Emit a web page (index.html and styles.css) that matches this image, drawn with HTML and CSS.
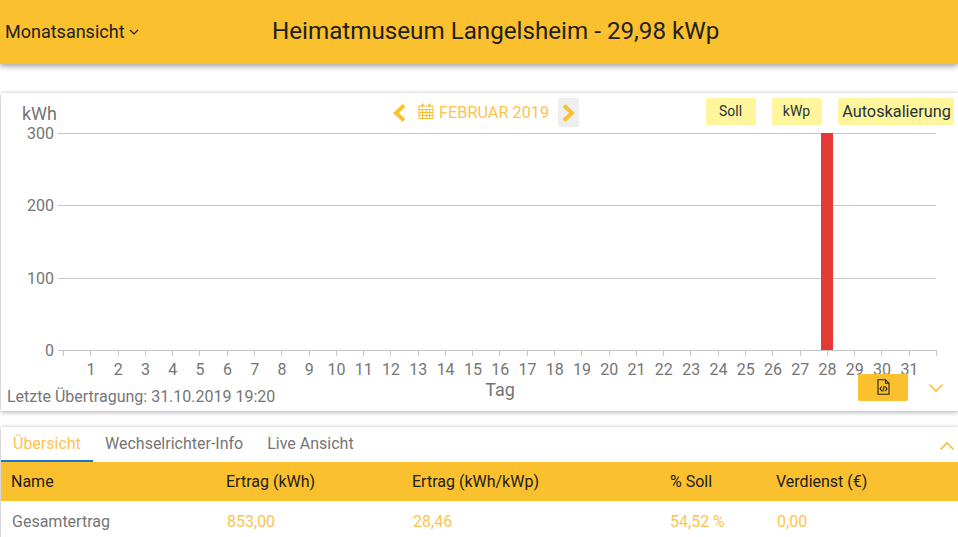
FILE: index.html
```html
<!DOCTYPE html>
<html lang="de">
<head>
    <meta charset="UTF-8">
    <meta name="viewport" content="width=device-width, initial-scale=1.0">
    <title>Heimatmuseum Langelsheim</title>
    <link rel="stylesheet" href="styles.css">
</head>
<body>

    <!-- Header -->
    <div class="header">
        <div class="view-select">Monatsansicht
            <svg class="view-caret" viewBox="0 0 10 6"><path d="M1 1l4 4 4-4"/></svg>
        </div>
        <h1>Heimatmuseum Langelsheim - 29,98 kWp</h1>
    </div>

    <!-- Chart card -->
    <div class="card chart-card">
        <svg class="chart" id="chart" viewBox="0 0 957 318" width="957" height="318">
            <text class="unit" x="21" y="27">kWh</text>
            <path class="grid" d="M62 40.5H935M62 112.5H935M62 185.5H935"/>
            <rect class="bar" x="820" y="40" width="12" height="217"/>
            <path class="axis" d="M62 257.5H936"/>
            <text class="tick-y" x="53" y="46">300</text>
            <text class="tick-y" x="53" y="118">200</text>
            <text class="tick-y" x="53" y="191">100</text>
            <text class="tick-y" x="53" y="263">0</text>
            <text class="axis-title" x="499" y="303">Tag</text>
        </svg>

        <div class="month-nav">
            <svg class="nav-arrow" viewBox="0 0 14 18"><path d="M12 1.500L4 9l8 7.500"/></svg>
            <svg class="cal-icon" viewBox="0 0 16 16">
                <path d="M1 3h14v12.500H1zM1 6.500h14M1 9.500h14M1 12.500h14M4.500 6.500v9M8 6.500v9M11.500 6.500v9"/>
                <path class="cal-rings" d="M4.500 .5v3.500M11.500 .5v3.500"/>
            </svg>
            <span class="month-label">FEBRUAR 2019</span>
            <span class="nav-next">
                <svg class="nav-arrow" viewBox="0 0 14 18"><path d="M2 1.500L10 9l-8 7.500"/></svg>
            </span>
        </div>

        <div class="chart-buttons">
            <span class="btn-soft">Soll</span>
            <span class="btn-soft">kWp</span>
            <span class="btn-soft btn-wide">Autoskalierung</span>
        </div>

        <div class="last-update">Letzte Übertragung: 31.10.2019 19:20</div>

        <div class="chart-actions">
            <span class="btn-export">
                <svg viewBox="0 0 13 16"><path d="M1 .7h7.500L12 4.200V15.300H1zM8.500 .7v3.500H12"/><path d="M4.800 7.500L3 9.800l1.800 2.300M8.200 7.500L10 9.800l-1.800 2.300M7.200 7l-1.400 5.600"/></svg>
            </span>
            <svg class="fold" viewBox="0 0 16 10"><path d="M1.500 1.500L8 8l6.500-6.500"/></svg>
        </div>
    </div>

    <!-- Table card -->
    <div class="card table-card">
        <div class="tabs">
            <a class="tab active">Übersicht</a>
            <a class="tab">Wechselrichter-Info</a>
            <a class="tab">Live Ansicht</a>
            <svg class="fold" viewBox="0 0 16 10"><path d="M1.500 8.500L8 2l6.500 6.500"/></svg>
        </div>
        <div class="row row-head">
            <span>Name</span>
            <span>Ertrag (kWh)</span>
            <span>Ertrag (kWh/kWp)</span>
            <span>% Soll</span>
            <span>Verdienst (€)</span>
        </div>
        <div class="row row-total">
            <span>Gesamtertrag</span>
            <span>853,00</span>
            <span>28,46</span>
            <span>54,52 %</span>
            <span>0,00</span>
        </div>
    </div>

    <script>
        // x axis ticks and day labels
        var svg = document.getElementById("chart");
        var ns = "http://www.w3.org/2000/svg";
        var step = 27.28;
        var d = "";
        for (var i = 0; i <= 32; i++) {
            d += "M" + (Math.round(62 + i * step) + 0.5) + " 257V263";
        }
        var ticks = document.createElementNS(ns, "path");
        ticks.setAttribute("class", "axis");
        ticks.setAttribute("d", d + "M57 40.500H62M57 112.500H62M57 185.500H62M57 257.500H62");
        svg.appendChild(ticks);
        for (var day = 1; day <= 31; day++) {
            var label = document.createElementNS(ns, "text");
            label.setAttribute("class", "tick-x");
            label.setAttribute("x", 62.7 + day * step);
            label.setAttribute("y", 282);
            label.textContent = day;
            svg.appendChild(label);
        }
    </script>

</body>
</html>
```

FILE: styles.css
```css
* {
    margin: 0;
    padding: 0;
    box-sizing: border-box;
}
html, body {
    height: 537px;
    overflow: hidden;
}
body {
    font-family: Roboto, Arial, sans-serif;
    background: #fff;
    color: #212121;
}
/* Header */
.header {
    height: 64px;
    background: #fbc02d;
    box-shadow: 0 2px 6px rgba(0, 0, 0, 0.4);
    display: flex;
    align-items: center;
    padding: 0 0 2px 5px;
}
.view-select {
    width: 267px;
    font-size: 18px;
    display: flex;
    align-items: center;
    gap: 4px;
}
.view-caret {
    width: 10px;
    height: 6px;
    margin-top: 2px;
    fill: none;
    stroke: #212121;
    stroke-width: 1.200;
}
.header h1 {
    font-size: 24.2px;
    font-weight: 400;
}
/* Cards */
.card {
    position: relative;
    margin-left: 1px;
    background: #fff;
    box-shadow: 0 1px 5px rgba(0, 0, 0, 0.35);
}
.chart-card {
    margin-top: 29px;
    height: 318px;
}
.chart {
    display: block;
}
.chart text {
    font-family: Roboto, Arial, sans-serif;
    fill: #757575;
}
.unit {
    font-size: 18px;
}
.grid {
    stroke: #c8c8c8;
    stroke-width: 1;
}
.axis {
    stroke: #c4c4c4;
    stroke-width: 1;
    fill: none;
}
.bar {
    fill: #e53935;
}
.tick-y {
    font-size: 16px;
    text-anchor: end;
}
.tick-x {
    font-size: 16px;
    text-anchor: middle;
}
.axis-title {
    font-size: 18px;
    text-anchor: middle;
}
/* Month navigation over the chart */
.month-nav {
    position: absolute;
    top: 5px;
    left: 391px;
    display: flex;
    align-items: center;
    color: #fdc34f;
    font-size: 16.3px;
}
.nav-arrow {
    width: 14px;
    height: 18px;
    fill: none;
    stroke: #fbc02d;
    stroke-width: 3.800;
    display: block;
}
.cal-icon {
    width: 16px;
    height: 16px;
    margin: -3px 0 0 12px;
    fill: none;
    stroke: #fbc02d;
    stroke-width: 1.100;
}
.cal-rings {
    stroke-width: 2;
}
.month-label {
    margin-left: 5px;
}
.nav-next {
    width: 21px;
    height: 29px;
    margin-left: 9px;
    border-radius: 2px;
    background: #eee;
    display: flex;
    align-items: center;
    justify-content: center;
}
/* Chart buttons */
.chart-buttons {
    position: absolute;
    top: 5px;
    right: 4px;
    display: flex;
    gap: 16px;
}
.btn-soft {
    width: 50px;
    height: 27px;
    padding: 0 1px 1px 0;
    background: #fff59d;
    border-radius: 2px;
    font-size: 14px;
    color: #263238;
    display: flex;
    align-items: center;
    justify-content: center;
}
.btn-wide {
    width: 116px;
    padding: 0 0 1px 1px;
    font-size: 16.3px;
}
.last-update {
    position: absolute;
    left: 6px;
    top: 294px;
    font-size: 16px;
    color: #757575;
}
.chart-actions {
    position: absolute;
    top: 281px;
    right: 0;
    display: flex;
    align-items: center;
}
.btn-export {
    width: 50px;
    height: 27px;
    background: #fbc02d;
    border-radius: 2px;
    display: flex;
    align-items: center;
    justify-content: center;
}
.btn-export svg {
    width: 13px;
    height: 16px;
    margin-top: -1px;
    fill: none;
    stroke: #212121;
    stroke-width: 1.100;
}
.fold {
    width: 16px;
    height: 10px;
    fill: none;
    stroke: #fbc02d;
    stroke-width: 1.600;
}
.chart-actions .fold {
    margin: 0 14px 0 20px;
}
/* Tabs and table */
.table-card {
    margin-top: 16px;
    height: 130px;
}
.tabs {
    height: 35px;
    display: flex;
    font-size: 16px;
    color: #757575;
    position: relative;
}
.tab {
    padding: 7px 12px 0;
    border-bottom: 2px solid transparent;
}
.tab.active {
    width: 92px;
    color: #fdc34f;
    border-bottom-color: #1976d2;
}
.tabs .fold {
    position: absolute;
    top: 14px;
    right: 3px;
}
.row {
    display: grid;
    grid-template-columns: 215px 186px 258px 106px 1fr;
    padding-left: 11px;
    font-size: 16px;
    align-items: center;
}
.row-head {
    height: 39px;
    padding-left: 10px;
    background: #fbc02d;
    color: #212121;
}
.row-total {
    height: 40px;
    grid-template-columns: 215px 186px 257px 107px 1fr;
    color: #fdc34f;
}
.row-total span:first-child {
    color: #757575;
}
```
